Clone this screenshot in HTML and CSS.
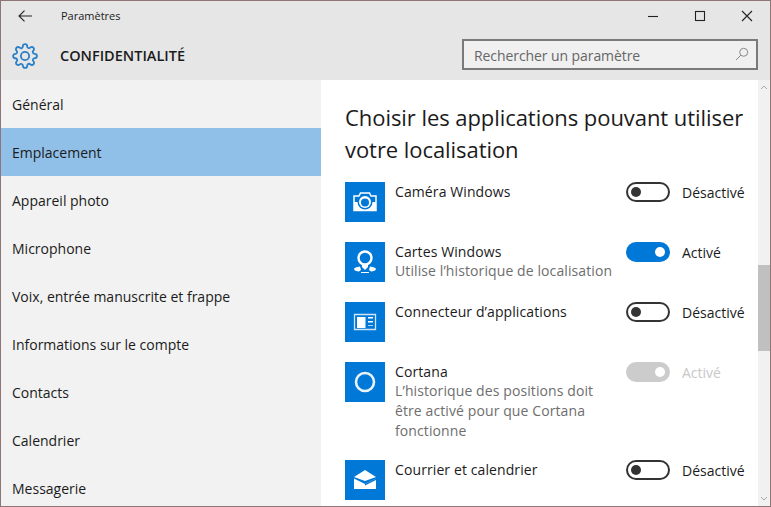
FILE: index.html
```html
<!DOCTYPE html>
<html lang="fr">
<head>
  <meta charset="UTF-8">
  <title>Paramètres</title>
  <link rel="stylesheet" href="styles.css">
</head>
<body>
<div class="window">
  <div class="header">
    <div class="titlebar">
      <svg class="back-icon" width="14" height="12" viewBox="0 0 14 12"><path d="M6.500 .7 1 6l5.500 5.300M1 6h13" fill="none" stroke="#222" stroke-width="1.100"/></svg>
      <span class="app-title">Paramètres</span>
      <div class="window-buttons">
        <svg width="12" height="12" viewBox="0 0 12 12"><path d="M1 6.500h10" stroke="#222" stroke-width="1.100"/></svg>
        <svg width="12" height="12" viewBox="0 0 12 12"><rect x="1.500" y="1.500" width="9" height="9" fill="none" stroke="#222" stroke-width="1.100"/></svg>
        <svg width="12" height="12" viewBox="0 0 12 12"><path d="M1 1l10 10M11 1 1 11" stroke="#222" stroke-width="1.100"/></svg>
      </div>
    </div>
    <div class="page-head">
      <svg class="gear-icon" width="26" height="26" viewBox="0 0 24 24" fill="none" stroke="#2a80c8" stroke-width="1.700"><circle cx="12" cy="12" r="3.800"/><path d="M19.400 15a1.650 1.650 0 0 0 .33 1.820l.06.06a2 2 0 0 1 0 2.830 2 2 0 0 1-2.830 0l-.06-.06a1.650 1.650 0 0 0-1.820-.33 1.650 1.650 0 0 0-1 1.510V21a2 2 0 0 1-2 2 2 2 0 0 1-2-2v-.09A1.650 1.650 0 0 0 9 19.400a1.650 1.650 0 0 0-1.820.33l-.06.06a2 2 0 0 1-2.830 0 2 2 0 0 1 0-2.830l.06-.06a1.650 1.650 0 0 0 .33-1.820 1.650 1.650 0 0 0-1.510-1H3a2 2 0 0 1-2-2 2 2 0 0 1 2-2h.09A1.650 1.650 0 0 0 4.600 9a1.650 1.650 0 0 0-.33-1.820l-.06-.06a2 2 0 0 1 0-2.830 2 2 0 0 1 2.830 0l.06.06a1.650 1.650 0 0 0 1.820.33H9a1.650 1.650 0 0 0 1-1.510V3a2 2 0 0 1 2-2 2 2 0 0 1 2 2v.09a1.650 1.650 0 0 0 1 1.510 1.650 1.650 0 0 0 1.820-.33l.06-.06a2 2 0 0 1 2.830 0 2 2 0 0 1 0 2.830l-.06.06a1.650 1.650 0 0 0-.33 1.820V9a1.650 1.650 0 0 0 1.510 1H21a2 2 0 0 1 2 2 2 2 0 0 1-2 2h-.09a1.650 1.650 0 0 0-1.510 1z"/></svg>
      <span class="page-title">CONFIDENTIALITÉ</span>
      <div class="search-box">
        <span class="search-text">Rechercher un paramètre</span>
        <svg width="14" height="14" viewBox="0 0 14 14" fill="none" stroke="#8a8a8a" stroke-width="1"><circle cx="8.700" cy="5.300" r="4"/><path d="M5.800 8.200 1 13"/></svg>
      </div>
    </div>
  </div>

  <div class="body-area">
    <div class="sidebar">
      <div class="nav-item">Général</div>
      <div class="nav-item active">Emplacement</div>
      <div class="nav-item">Appareil photo</div>
      <div class="nav-item">Microphone</div>
      <div class="nav-item">Voix, entrée manuscrite et frappe</div>
      <div class="nav-item">Informations sur le compte</div>
      <div class="nav-item">Contacts</div>
      <div class="nav-item">Calendrier</div>
      <div class="nav-item">Messagerie</div>
    </div>

    <div class="content">
      <h1>Choisir les applications pouvant utiliser votre localisation</h1>

      <div class="app-row">
        <div class="app-icon">
          <svg width="40" height="40" viewBox="0 0 40 40"><path d="M9 14h5l1.500-3h9l1.500 3h5v14.500H9z" fill="none" stroke="#fff" stroke-width="1.500"/><path d="M9 20h22v9H9z" fill="#fff"/><circle cx="20" cy="20" r="7.500" fill="#0078d7"/><circle cx="20" cy="20" r="6" fill="#fff"/><circle cx="20" cy="20.500" r="4" fill="#0078d7"/></svg>
        </div>
        <div class="app-text"><div class="app-name">Caméra Windows</div></div>
        <div class="switch-cell">
          <span class="switch"><span class="knob"></span></span>
          <span class="switch-label">Désactivé</span>
        </div>
      </div>

      <div class="app-row">
        <div class="app-icon">
          <svg width="40" height="40" viewBox="0 0 40 40"><circle cx="20" cy="16" r="6.500" fill="none" stroke="#fff" stroke-width="2.400"/><path d="M17 23h6v2l-3 3-3-3z" fill="#fff"/><path d="M15 24.500c-3.500.5-6 1.300-6 2.500 0 1.300 2.500 2.500 5 2.500l2-1.500zM25 24.500c3.500.5 6 1.300 6 2.500 0 1.300-2.500 2.500-5 2.500L24 28z" fill="#fff"/><path d="M16 30h8v1h-8z" fill="#fff"/></svg>
        </div>
        <div class="app-text">
          <div class="app-name">Cartes Windows</div>
          <div class="app-desc">Utilise l’historique de localisation</div>
        </div>
        <div class="switch-cell">
          <span class="switch on"><span class="knob"></span></span>
          <span class="switch-label">Activé</span>
        </div>
      </div>

      <div class="app-row">
        <div class="app-icon">
          <svg width="40" height="40" viewBox="0 0 40 40"><path d="M9.500 12.500h21v15h-21z" fill="none" stroke="#cfe4f7" stroke-width="1.300"/><path d="M12 15h8.500v11H12z" fill="#fff"/><path d="M23 15h5v1.500h-5zM23 19h5v1.500h-5z" fill="#fff"/><path d="M23 23h5v1h-5z" fill="#a8d0f2"/></svg>
        </div>
        <div class="app-text"><div class="app-name">Connecteur d’applications</div></div>
        <div class="switch-cell">
          <span class="switch"><span class="knob"></span></span>
          <span class="switch-label">Désactivé</span>
        </div>
      </div>

      <div class="app-row">
        <div class="app-icon">
          <svg width="40" height="40" viewBox="0 0 40 40"><circle cx="20" cy="20" r="9" fill="none" stroke="#e8f3fc" stroke-width="2.600"/></svg>
        </div>
        <div class="app-text">
          <div class="app-name">Cortana</div>
          <div class="app-desc narrow">L’historique des positions doit être activé pour que Cortana fonctionne</div>
        </div>
        <div class="switch-cell disabled">
          <span class="switch on"><span class="knob"></span></span>
          <span class="switch-label">Activé</span>
        </div>
      </div>

      <div class="app-row">
        <div class="app-icon">
          <svg width="40" height="40" viewBox="0 0 40 40"><path d="M20 10 31 17 20 21 9 17z" fill="#fff"/><path d="M9 18.500 20 24l11-5.500V29H9z" fill="#fff"/><path d="M20 24l11-5.500v1.600L20 25.500z" fill="#0078d7"/></svg>
        </div>
        <div class="app-text"><div class="app-name">Courrier et calendrier</div></div>
        <div class="switch-cell">
          <span class="switch"><span class="knob"></span></span>
          <span class="switch-label">Désactivé</span>
        </div>
      </div>
    </div>

    <div class="scrollbar">
      <svg width="8" height="5" viewBox="0 0 8 5"><path d="M1 4l3-3 3 3" fill="none" stroke="#a8a8a8"/></svg>
      <div class="thumb"></div>
      <div class="scroll-spacer"></div>
      <svg width="8" height="5" viewBox="0 0 8 5"><path d="M1 1l3 3 3-3" fill="none" stroke="#a8a8a8"/></svg>
    </div>
  </div>
</div>
</body>
</html>
```

FILE: styles.css
```css
html, body {
  margin: 0;
  padding: 0;
}

body {
  font-family: "Open Sans", "Noto Sans", Arial, sans-serif;
  font-size: 14px;
  color: #1b1b1b;
  background-color: #fff;
}

.window {
  width: 771px;
  height: 507px;
  box-sizing: border-box;
  border: 1px solid #8f7478;
  display: flex;
  flex-direction: column;
  overflow: hidden;
}

.header {
  background-color: #e6e6e6;
  height: 79px;
  flex-shrink: 0;
}

.titlebar {
  display: flex;
  align-items: center;
  height: 30px;
  padding-left: 17px;
}

.app-title {
  margin-left: 29px;
  margin-bottom: 2px;
  font-size: 11px;
}

.window-buttons {
  margin-left: auto;
  display: flex;
  gap: 35px;
  padding-right: 17px;
}

.page-head {
  display: flex;
  align-items: center;
  height: 49px;
  padding-left: 11px;
}

.page-title {
  margin-left: 22px;
  font-size: 14.500px;
  font-weight: 600;
}

.search-box {
  margin-left: auto;
  margin-right: 12px;
  margin-top: -3px;
  width: 296px;
  height: 31px;
  box-sizing: border-box;
  border: 2px solid #7a7a7a;
  background-color: #f0f0f0;
  display: flex;
  align-items: center;
  justify-content: space-between;
  padding: 0 7px 0 10px;
  color: #666;
  font-size: 14px;
  letter-spacing: -0.08px;
}

.search-text {
  padding-top: 2px;
}

.body-area {
  flex: 1;
  display: flex;
  min-height: 0;
}

.sidebar {
  width: 320px;
  flex-shrink: 0;
  background-color: #f2f2f2;
}

.nav-item {
  height: 48px;
  line-height: 50px;
  padding-left: 11px;
  font-size: 14px;
}

.nav-item.active {
  background-color: #90bfe8;
}

.content {
  flex: 1;
  padding: 21px 12px 0 24px;
  min-width: 0;
}

h1 {
  margin: 0 0 17px 0;
  font-size: 22px;
  font-weight: 400;
  line-height: 32px;
  letter-spacing: -0.06px;
}

.app-row {
  display: flex;
  min-height: 42px;
  margin-bottom: 18px;
}

.app-icon {
  width: 40px;
  height: 40px;
  flex-shrink: 0;
  background-color: #0078d7;
}

.app-text {
  width: 231px;
  margin-left: 10px;
  line-height: 20px;
}

.app-name {
  font-size: 14px;
  letter-spacing: 0.1px;
}

.app-desc {
  font-size: 14px;
  letter-spacing: 0.1px;
  color: #6e6e6e;
  margin-top: -1px;
  padding-bottom: 1px;
}

.app-desc.narrow {
  max-width: 205px;
}

.switch-cell {
  display: flex;
  align-items: center;
  height: 20px;
  font-size: 14px;
}

.switch {
  width: 44px;
  height: 20px;
  box-sizing: border-box;
  border: 2px solid #333;
  border-radius: 10px;
  display: flex;
  align-items: center;
  padding: 0 3px;
  flex-shrink: 0;
}

.knob {
  width: 10px;
  height: 10px;
  border-radius: 50%;
  background-color: #333;
}

.switch.on {
  border-color: #0078d7;
  background-color: #0078d7;
  justify-content: flex-end;
}

.switch.on .knob {
  background-color: #fff;
}

.switch-label {
  margin-left: 12px;
}

.disabled .switch {
  border-color: #ccc;
  background-color: #ccc;
}

.disabled .knob {
  background-color: #a6a6a6;
}

.disabled .switch-label {
  color: #c8c8c8;
}

.scrollbar {
  width: 12px;
  flex-shrink: 0;
  background-color: #f1f1f1;
  display: flex;
  flex-direction: column;
  align-items: center;
  padding: 5px 0;
  box-sizing: border-box;
}

.thumb {
  align-self: stretch;
  height: 86px;
  margin-top: 175px;
  background-color: #c0c0c0;
}

.scroll-spacer {
  flex: 1;
}
```
